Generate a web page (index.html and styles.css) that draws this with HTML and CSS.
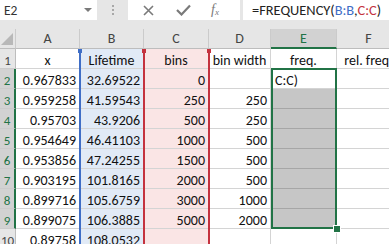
FILE: index.html
```html
<!doctype html>
<html lang="en">
  <head>
    <meta charset="UTF-8" />
    <title>FREQUENCY - Excel</title>
    <link rel="stylesheet" href="styles.css">
  </head>
  <body>
    <div class="formula-bar">
      <div class="name-box">
        <span>E2</span>
        <span class="caret"></span>
      </div>
      <div class="grip"><i></i><i></i><i></i></div>
      <div class="fx-buttons">
        <svg class="btn-x" width="11" height="11" viewBox="0 0 11 11"><path d="M1 1 L10 10 M10 1 L1 10" stroke="#7a7a7a" stroke-width="1.6" fill="none"/></svg>
        <svg class="btn-ok" width="15" height="12" viewBox="0 0 15 12"><path d="M1 6 L5.5 10.5 L14 1.5" stroke="#7a7a7a" stroke-width="2.2" fill="none"/></svg>
        <span class="btn-fx">f<sub>x</sub></span>
      </div>
      <div class="formula">=FREQUENCY(<span class="ref-b">B:B</span>,<span class="ref-c">C:C</span>)</div>
    </div>

    <div class="sheet">
      <div class="grid" id="grid"></div>
      <div class="range range-b"></div>
      <div class="range range-c"></div>
      <div class="selection"><span class="fill-handle"></span></div>
    </div>

    <script>
      const rows = [
        ['x', 'Lifetime', 'bins', 'bin width', 'freq.', 'rel. freq.'],
        ['0.967833', '32.69522', '0', '', 'C:C)', ''],
        ['0.959258', '41.59543', '250', '250', '', ''],
        ['0.95703', '43.9206', '500', '250', '', ''],
        ['0.954649', '46.41103', '1000', '500', '', ''],
        ['0.953856', '47.24255', '1500', '500', '', ''],
        ['0.903195', '101.8165', '2000', '500', '', ''],
        ['0.899716', '105.6759', '3000', '1000', '', ''],
        ['0.899075', '106.3885', '5000', '2000', '', ''],
        ['0.89758', '108.0532', '', '', '', ''],
      ];
      const cols = ['A', 'B', 'C', 'D', 'E', 'F'];

      const grid = document.getElementById('grid');

      // Column headers
      const corner = document.createElement('div');
      corner.className = 'col-head corner';
      grid.appendChild(corner);
      cols.forEach((c) => {
        const h = document.createElement('div');
        h.className = 'col-head' + (c === 'E' ? ' active' : '');
        h.textContent = c;
        grid.appendChild(h);
      });

      // Body rows
      rows.forEach((row, i) => {
        const n = i + 1;
        const rh = document.createElement('div');
        rh.className = 'row-head' + (n >= 2 && n <= 9 ? ' active' : '');
        rh.textContent = n;
        grid.appendChild(rh);

        row.forEach((val, j) => {
          const cell = document.createElement('div');
          let cls = 'cell';
          if (n === 1) cls += ' title';
          else if (j === 4 && n === 2) cls += ' editing';
          else if (val !== '' && j !== 4) cls += ' num';
          if (j === 1) cls += ' tint-b';
          if (j === 2) cls += ' tint-c';
          if (j === 4 && n >= 3 && n <= 9) cls += ' picked';
          cell.className = cls;
          cell.textContent = val;
          grid.appendChild(cell);
        });
      });
    </script>
  </body>
</html>
```

FILE: styles.css
```css
body {
  margin: 0;
  width: 389px;
  height: 244px;
  overflow: hidden;
  background: #e6e6e6;
  font-family: Carlito, "Liberation Sans", Arial, sans-serif;
  color: #111;
}

/* ---------- formula bar ---------- */
.formula-bar {
  display: flex;
  height: 20px;
}
.name-box {
  width: 97px;
  background: #fff;
  display: flex;
  align-items: center;
  justify-content: space-between;
  padding: 0 5px 0 4px;
  box-sizing: border-box;
  font-size: 13.5px;
  color: #333;
}
.caret {
  width: 0;
  height: 0;
  border-left: 4px solid transparent;
  border-right: 4px solid transparent;
  border-top: 4px solid #7a7a7a;
}
.grip {
  width: 31px;
  display: flex;
  flex-direction: column;
  align-items: center;
  justify-content: center;
  gap: 2px;
}
.grip i {
  width: 2px;
  height: 2px;
  background: #a8a8a8;
}
.fx-buttons {
  width: 112px;
  background: #fff;
  display: flex;
  align-items: center;
  padding-left: 15px;
  box-sizing: border-box;
}
.btn-x {
  margin-right: 22px;
}
.btn-ok {
  margin-right: 20px;
}
.btn-fx {
  font-family: "Liberation Serif", serif;
  font-style: italic;
  color: #7a7a7a;
  font-size: 14px;
}
.btn-fx sub {
  font-size: 9px;
  vertical-align: -1px;
}
.formula {
  flex: 1;
  margin-left: 3px;
  background: #fff;
  padding-left: 9px;
  font-size: 14.4px;
  line-height: 20px;
  white-space: nowrap;
  color: #222;
}
.ref-b {
  color: #3f6ec6;
}
.ref-c {
  color: #c4323e;
}

/* ---------- sheet ---------- */
.sheet {
  position: relative;
  margin-top: 9px;
}
.grid {
  display: grid;
  grid-template-columns: 16px 64px 64px 65px 62px 66px 64px;
  grid-auto-rows: 20px;
  width: 401px;
}
.col-head {
  background: #e6e6e6;
  border-right: 1px solid #cbcbcb;
  border-bottom: 1px solid #bdbdbd;
  box-sizing: border-box;
  text-align: center;
  font-size: 14px;
  line-height: 20px;
  color: #444;
}
.col-head.active {
  background: #d2d2d2;
  color: #217346;
  border-bottom: 2px solid #217346;
}
.corner {
  position: relative;
}
.corner::after {
  content: "";
  position: absolute;
  right: 2px;
  bottom: 3px;
  border-left: 12px solid transparent;
  border-bottom: 12px solid #b8b8b8;
}
.row-head {
  background: #e6e6e6;
  border-right: 1px solid #bdbdbd;
  border-bottom: 1px solid #cbcbcb;
  box-sizing: border-box;
  text-align: center;
  font-size: 13px;
  padding-top: 4px;
  line-height: 16px;
  color: #444;
  white-space: nowrap;
}
.row-head.active {
  background: #d2d2d2;
  color: #217346;
  border-right: 2px solid #217346;
}
.cell {
  background: #fff;
  border-right: 1px solid #d4d4d4;
  border-bottom: 1px solid #d4d4d4;
  box-sizing: border-box;
  font-size: 14px;
  padding: 4px 3px 0;
  line-height: 16px;
  white-space: nowrap;
}
.cell.title {
  text-align: center;
}
.cell.num {
  text-align: right;
}
.cell.editing {
  padding-left: 4px;
}
.tint-b {
  background: #e1eaf6;
}
.tint-c {
  background: #fae5e5;
}
.picked {
  background: #c6c6c6;
  border-bottom-color: #a6a6a6;
  border-right-color: #a6a6a6;
}

/* ---------- overlays ---------- */
.range {
  position: absolute;
  top: 20px;
  bottom: -40px;
  pointer-events: none;
}
.range-b {
  left: 79px;
  width: 62px;
  border-left: 2px solid #3f6ec6;
  border-right: 2px solid #3f6ec6;
}
.range-c {
  left: 143px;
  width: 63px;
  border-left: 2px solid #c4323e;
  border-right: 2px solid #c4323e;
}
.range::before,
.range::after {
  content: "";
  position: absolute;
  top: 0;
  width: 4px;
  height: 4px;
}
.range::before {
  left: -3px;
}
.range::after {
  right: -3px;
}
.range-b::before,
.range-b::after {
  background: #3f6ec6;
}
.range-c::before,
.range-c::after {
  background: #c4323e;
}
.selection {
  position: absolute;
  left: 271px;
  top: 39px;
  width: 62px;
  height: 157px;
  border: 2px solid #217346;
  pointer-events: none;
}
.fill-handle {
  position: absolute;
  right: -6px;
  bottom: -6px;
  width: 6px;
  height: 6px;
  background: #217346;
  border: 1px solid #fff;
}
```
